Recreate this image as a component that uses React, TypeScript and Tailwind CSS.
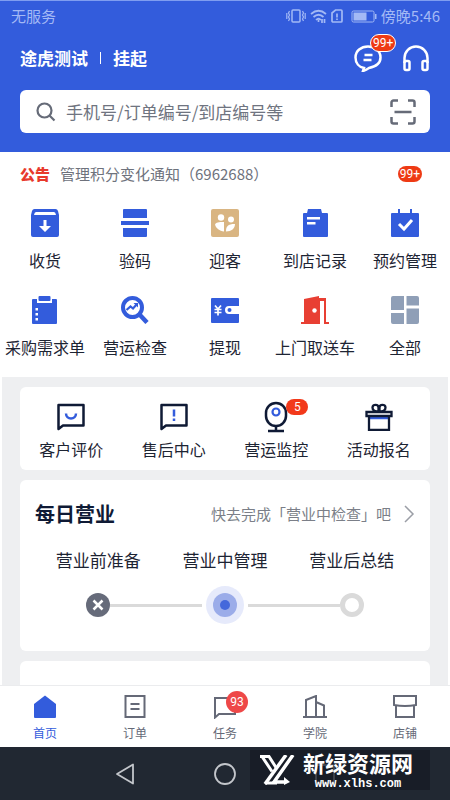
import React from 'react';
import clsx from 'clsx';

const BLUE = '#335cdc';

const ReceiveIcon = () => (
  <svg className="h-7 w-7" viewBox="0 0 28 28" fill={BLUE}>
    <path d="M4 0h20a3 3 0 0 1 3 2l1 4v20a2 2 0 0 1-2 2H2a2 2 0 0 1-2-2V6l1-4a3 3 0 0 1 3-2z" />
    <path d="M5 3h18q1.500 0 2 3H3q.5-3 2-3zM12.500 11h3v6H20l-6 6-6-6h4.500z" fill="#fff" />
  </svg>
);

const CodeIcon = () => (
  <svg className="h-7 w-7" viewBox="0 0 28 28" fill={BLUE}>
    <path d="M3 0h22a1 1 0 0 1 1 1v8H2V1a1 1 0 0 1 1-1zM0 12h28v4H0zM2 19h24v8a1 1 0 0 1-1 1H3a1 1 0 0 1-1-1z" />
  </svg>
);

const GuestIcon = () => (
  <svg className="h-7 w-7" viewBox="0 0 28 28">
    <rect width="28" height="28" rx="2" fill="#d9b582" />
    <g fill="#fff">
      <circle cx="10" cy="8.500" r="3.200" />
      <circle cx="20" cy="10.500" r="3" />
      <path d="M4 15.500c1-2 3.500-2.500 9-2.500v9.500C8.500 22 5 19.500 4 15.500z" />
      <path d="M15 22.500c0-5 1.500-7.500 9-7.500 0 4.500-3.500 7.500-9 7.500z" />
    </g>
  </svg>
);

const RecordIcon = () => (
  <svg className="h-7 w-7" viewBox="0 0 28 28" fill={BLUE}>
    <path d="M7 0h13l1 4h5a1 1 0 0 1 1 1v22a1 1 0 0 1-1 1H3a1 1 0 0 1-1-1V5a1 1 0 0 1 1-1h3z" />
    <path d="M6 8h13v2.500H6zM6 13h8.500v2.500H6z" fill="#fff" />
  </svg>
);

const BookingIcon = () => (
  <svg className="h-7 w-7" viewBox="0 0 28 28" fill={BLUE}>
    <path d="M7 0h2v4h10V0h2v4h6a1 1 0 0 1 1 1v22a1 1 0 0 1-1 1H1a1 1 0 0 1-1-1V5a1 1 0 0 1 1-1h6z" />
    <path d="M8 15l5 5 8-9" fill="none" stroke="#fff" strokeWidth="3" />
  </svg>
);

const PurchaseIcon = () => (
  <svg className="h-7 w-7" viewBox="0 0 28 28" fill={BLUE}>
    <path d="M2 3h4v4h15V3h4a1 1 0 0 1 1 1v23a1 1 0 0 1-1 1H2a1 1 0 0 1-1-1V4a1 1 0 0 1 1-1z" />
    <rect x="7.500" width="12" height="5" rx="1" />
    <path d="M4.500 12H7v2.500H4.500zM4.500 17H7v2.500H4.500zM4.500 22H7v2.500H4.500z" fill="#fff" />
  </svg>
);

const InspectIcon = () => (
  <svg className="h-7 w-7" viewBox="0 0 28 28" fill="none" stroke={BLUE}>
    <circle cx="11.500" cy="11.500" r="9.500" strokeWidth="4" />
    <path d="M18.500 18.500l7.500 8" strokeWidth="4.500" />
    <path d="M5.500 14l4-3.500 2.500 2 4-4.500" strokeWidth="2.200" />
    <path d="M12.500 7h4.500v4.500z" fill={BLUE} stroke="none" />
  </svg>
);

const WithdrawIcon = () => (
  <svg className="h-7 w-7" viewBox="0 0 28 28" fill={BLUE}>
    <path d="M1 2h26a1 1 0 0 1 1 1v7H18a4 4 0 0 0 0 8h10v8a1 1 0 0 1-1 1H1a1 1 0 0 1-1-1V3a1 1 0 0 1 1-1z" />
    <circle cx="18.500" cy="14" r="2" />
    <path d="M4 9.500l3 3.500 3-3.500M3.500 13.500h7M3.500 16.500h7M7 13v6.500" fill="none" stroke="#fff" strokeWidth="1.700" />
  </svg>
);

const DoorIcon = () => (
  <svg className="h-7 w-7" viewBox="0 0 28 28" fill="#e83f33">
    <path d="M3 3l15-3v2h7v24h3v2h-5V5h-4v23H0v-2h3z" />
    <circle cx="13.500" cy="14.500" r="2.200" fill="#fff" />
  </svg>
);

const AllIcon = () => (
  <svg className="h-7 w-7" viewBox="0 0 28 28" fill="#8f9fb7">
    <path d="M2 0h11v14H0V2a2 2 0 0 1 2-2zM15.500 0H26a2 2 0 0 1 2 2v7.500H15.500zM0 17h13v11H2a2 2 0 0 1-2-2zM15.500 12.500H28V26a2 2 0 0 1-2 2H15.500z" />
  </svg>
);

const ReviewIcon = () => (
  <svg className="h-7 w-7" viewBox="0 0 28 28" fill="none" strokeWidth="2.500">
    <path d="M1.500 2h25v20.500H6L1.500 26z" stroke="#0f1a35" strokeLinejoin="round" />
    <path d="M9 10.500a5 5 0 0 0 10 0" stroke={BLUE} />
  </svg>
);

const AfterSaleIcon = () => (
  <svg className="h-7 w-7" viewBox="0 0 28 28" fill="none" strokeWidth="2.500">
    <path d="M1.500 2h25v20.500H6L1.500 26z" stroke="#0f1a35" strokeLinejoin="round" />
    <path d="M14 6.500v7M14 15.500v2.500" stroke={BLUE} />
  </svg>
);

const MonitorIcon = () => (
  <svg className="h-8 w-7" viewBox="0 0 28 32" fill="none" strokeWidth="2.500">
    <rect x="4" y="2" width="20" height="23" rx="10" stroke="#0f1a35" />
    <path d="M14 25v5M6 30h16" stroke="#0f1a35" />
    <circle cx="14" cy="11" r="3.500" stroke={BLUE} strokeWidth="2.200" />
  </svg>
);

const GiftIcon = () => (
  <svg className="h-7 w-7" viewBox="0 0 28 28" fill="none" stroke="#0f1a35" strokeWidth="2.300">
    <path d="M4 15h20" stroke={BLUE} strokeWidth="2.500" />
    <path d="M1.500 9h25v4h-25zM4 13v14h20V13" />
    <path d="M13.500 8.500c-3.500 0-6-1.500-6-4 0-3.500 6-3.500 6 0zM14.500 8.500c3.500 0 6-1.500 6-4 0-3.500-6-3.500-6 0z" />
  </svg>
);

const HomeIcon = () => (
  <svg className="h-6 w-6" viewBox="0 0 24 24" fill={BLUE}>
    <path d="M12 0.500L23 9v13a1 1 0 0 1-1 1H2a1 1 0 0 1-1-1V9z" />
  </svg>
);

const OrderIcon = () => (
  <svg className="h-6 w-6" viewBox="0 0 24 24" fill="none" stroke="currentColor" strokeWidth="2">
    <path d="M2.500 1h19v21h-19zM7.500 9h9M7.500 14h9" />
  </svg>
);

const TaskIcon = () => (
  <svg className="h-6 w-6" viewBox="0 0 24 24" fill="none" stroke="currentColor" strokeWidth="2">
    <path d="M2 3h20v16H6l-4 3.500z" />
  </svg>
);

const SchoolIcon = () => (
  <svg className="h-6 w-6" viewBox="0 0 24 24" fill="none" stroke="currentColor" strokeWidth="2">
    <path d="M0 22h24M3 22V5l10-4v21M13 7l8 3.500V22" />
  </svg>
);

const ShopIcon = () => (
  <svg className="h-6 w-6" viewBox="0 0 24 24" fill="none" stroke="currentColor" strokeWidth="2">
    <path d="M1 1h22v9q-11 2-22 0zM3 10v12h18V10" />
  </svg>
);

const shortcuts = [
  { label: '收货', icon: <ReceiveIcon /> },
  { label: '验码', icon: <CodeIcon /> },
  { label: '迎客', icon: <GuestIcon /> },
  { label: '到店记录', icon: <RecordIcon /> },
  { label: '预约管理', icon: <BookingIcon /> },
  { label: '采购需求单', icon: <PurchaseIcon /> },
  { label: '营运检查', icon: <InspectIcon /> },
  { label: '提现', icon: <WithdrawIcon /> },
  { label: '上门取送车', icon: <DoorIcon /> },
  { label: '全部', icon: <AllIcon /> },
];

const services = [
  { label: '客户评价', icon: <ReviewIcon /> },
  { label: '售后中心', icon: <AfterSaleIcon /> },
  { label: '营运监控', icon: <MonitorIcon />, badge: 5 },
  { label: '活动报名', icon: <GiftIcon /> },
];

const tabs = [
  { label: '首页', icon: <HomeIcon />, active: true },
  { label: '订单', icon: <OrderIcon /> },
  { label: '任务', icon: <TaskIcon />, badge: 93 },
  { label: '学院', icon: <SchoolIcon /> },
  { label: '店铺', icon: <ShopIcon /> },
];

function StatusBar() {
  return (
    <div className="flex h-[30px] items-center justify-between pr-2.5 pl-[11px] text-[#a3b9f5]">
      <span className="text-[15px]">无服务</span>
      <div className="flex items-center gap-1">
        <svg className="h-4 w-5" viewBox="0 0 20 16" fill="none" stroke="currentColor" strokeWidth="1.500">
          <rect x="6" y="2" width="8" height="12" rx="1" />
          <path d="M3.500 3l-1 2 1 2-1 2 1 2-1 2M.8 5v6M16.500 3l1 2-1 2 1 2-1 2 1 2M19.200 5v6" strokeWidth="1.200" />
        </svg>
        <svg className="h-4 w-[17px]" viewBox="0 0 17 16" fill="none" stroke="currentColor" strokeWidth="1.700">
          <path d="M1 6q7.500-6.500 15 0M3.500 9q5-4.500 10 0M6 12q2.500-2.500 5 0" />
          <path d="M8.500 12v2M12 11v4M14.500 11v4" />
        </svg>
        <svg className="h-4 w-3" viewBox="0 0 12 16" fill="none" stroke="currentColor" strokeWidth="1.700">
          <path d="M4.500 2H10a1 1 0 0 1 1 1v10a1 1 0 0 1-1 1H2a1 1 0 0 1-1-1V5zM6 5.500v4M6 10.500V12" />
        </svg>
        <svg className="ml-1 h-4 w-[26px]" viewBox="0 0 26 16">
          <rect x="1" y="3" width="22" height="11" rx="1.500" fill="none" stroke="currentColor" />
          <path d="M2.500 4.500h13v8h-13zM24 6h1.500v5H24z" fill="currentColor" />
        </svg>
        <span className="text-[15px]">傍晚5:46</span>
      </div>
    </div>
  );
}

function Header() {
  return (
    <header className="border-t border-[#7f9df0] bg-[#335cdc] pb-[19px]">
      <StatusBar />
      <div className="flex h-[54px] items-center justify-between px-5 text-white">
        <div className="flex items-center text-[17px] font-bold">
          <h1>途虎测试</h1>
          <span className="mx-3 h-3 w-px bg-white" />
          <button type="button">挂起</button>
        </div>
        <div className="flex items-center gap-5">
          <button type="button" aria-label="消息" className="relative">
            <svg className="h-7 w-7" viewBox="0 0 28 28" fill="none" stroke="currentColor" strokeWidth="2.500">
              <path d="M9 27l1-3C5 23 1.500 19 1.500 13.500 1.500 7 7 2.500 14 2.500S26.500 7 26.500 13.500C26.500 20 20 23 15 24q-3 2-6 3z" />
              <path d="M10.500 11h8M9.500 16h8" />
            </svg>
            <span className="absolute -top-2.5 left-4 rounded-full border border-white bg-[#ee3a14] px-0.5 font-[Roboto,sans-serif] text-xs leading-4">99+</span>
          </button>
          <button type="button" aria-label="客服">
            <svg className="h-7 w-7" viewBox="0 0 28 28" fill="none" stroke="currentColor" strokeWidth="2.500">
              <path d="M2.500 19v-5a11.500 11.500 0 0 1 23 0v5" />
              <rect x="2.500" y="17" width="5" height="9" rx="1.500" />
              <rect x="20.500" y="17" width="5" height="9" rx="1.500" />
            </svg>
          </button>
        </div>
      </div>
      <div className="mx-5 mt-[5px] flex h-[43px] items-center rounded-md bg-white pr-3.5 pl-4 text-[#666b78]">
        <svg className="h-5 w-5 shrink-0" viewBox="0 0 20 20" fill="none" stroke="currentColor" strokeWidth="2.200">
          <circle cx="8.500" cy="8.500" r="7" />
          <path d="M13.500 13.500l5 5" />
        </svg>
        <input
          type="text"
          aria-label="搜索"
          placeholder="手机号/订单编号/到店编号等"
          className="ml-2.5 min-w-0 flex-1 text-[17px] outline-none placeholder:text-[#6f7480]"
        />
        <button type="button" aria-label="扫码">
          <svg className="h-[26px] w-[26px]" viewBox="0 0 26 26" fill="none" stroke="currentColor" strokeWidth="2.500">
            <path d="M1.500 8V3.500a2 2 0 0 1 2-2H8M18 1.500h4.500a2 2 0 0 1 2 2V8M24.500 18v4.500a2 2 0 0 1-2 2H18M8 24.500H3.500a2 2 0 0 1-2-2V18M4.500 13h17" />
          </svg>
        </button>
      </div>
    </header>
  );
}

function Shortcuts() {
  return (
    <section className="bg-white pb-[18px]">
      <div className="flex h-11 items-center pr-7 pl-5">
        <span className="text-[15px] font-black text-[#e8392c]">公告</span>
        <a href="#notice" className="ml-2.5 flex-1 text-[15px] text-[#6e727c]">管理积分变化通知（6962688）</a>
        <span className="rounded-full bg-[#ee3a14] px-0.5 font-[Roboto,sans-serif] text-xs leading-4 text-white">99+</span>
      </div>
      <div className="grid grid-cols-5 gap-y-6 pt-[13px]">
        {shortcuts.map((item) => (
          <button key={item.label} type="button" className="flex flex-col items-center gap-[11px]">
            {item.icon}
            <span className="text-base leading-6 whitespace-nowrap">{item.label}</span>
          </button>
        ))}
      </div>
    </section>
  );
}

function Services() {
  return (
    <section className="grid grid-cols-4 rounded-md bg-white pt-4 pb-[9px]">
      {services.map((item) => (
        <button key={item.label} type="button" className="flex flex-col items-center gap-1.5">
          <span className="relative flex h-7 items-center">
            {item.icon}
            {item.badge && (
              <span className="absolute -top-1 left-6 w-[22px] rounded-full bg-[#f2391a] font-[Roboto,sans-serif] text-xs leading-4 text-white">
                {item.badge}
              </span>
            )}
          </span>
          <span className="text-base leading-6">{item.label}</span>
        </button>
      ))}
    </section>
  );
}

function DailyBusiness() {
  return (
    <section className="rounded-md bg-white px-[15px] pt-5 pb-[27px]">
      <div className="flex h-7 items-center justify-between">
        <h2 className="text-xl font-bold text-[#0f1a35]">每日营业</h2>
        <a href="#check" className="flex items-center gap-3 text-[15px] text-[#7b7f88]">
          快去完成「营业中检查」吧
          <svg className="h-[18px] w-3" viewBox="0 0 12 18" fill="none" stroke="#9b9ea6" strokeWidth="1.500">
            <path d="M2 1l8 8-8 8" />
          </svg>
        </a>
      </div>
      <ol className="mt-5 grid grid-cols-3 text-center text-[17px] leading-6">
        <li>营业前准备</li>
        <li>营业中管理</li>
        <li>营业后总结</li>
      </ol>
      <div className="mt-3.5 flex h-[38px] items-center px-[51px]">
        <svg className="h-6 w-6" viewBox="0 0 24 24">
          <circle cx="12" cy="12" r="12" fill="#666b7a" />
          <path d="M7.500 7.500l9 9M16.500 7.500l-9 9" stroke="#fff" strokeWidth="2.500" />
        </svg>
        <span className="mr-1 h-[3px] flex-1 bg-[#dadada]" />
        <svg className="h-[38px] w-[38px]" viewBox="0 0 38 38">
          <circle cx="19" cy="19" r="19" fill="#e6eafb" />
          <circle cx="19" cy="19" r="12" fill="#9bace9" />
          <circle cx="19" cy="19" r="5" fill="#4468db" />
        </svg>
        <span className="ml-1 h-[3px] flex-1 bg-[#dadada]" />
        <span className="h-6 w-6 rounded-full border-5 border-[#dadada]" />
      </div>
    </section>
  );
}

function TabBar() {
  return (
    <nav className="grid grid-cols-5 border-t border-[#ebecee] bg-white pt-[9px] pb-1.5">
      {tabs.map((tab) => (
        <button
          key={tab.label}
          type="button"
          className={clsx('flex flex-col items-center gap-1.5', tab.active ? 'text-[#335cdc]' : 'text-[#656977]')}
        >
          <span className="relative">
            {tab.icon}
            {tab.badge && (
              <span className="absolute -top-1 left-[13px] h-[22px] w-[22px] rounded-full bg-[#ee4848] font-[Roboto,sans-serif] text-xs leading-[22px] text-white">
                {tab.badge}
              </span>
            )}
          </span>
          <span className="text-xs leading-4">{tab.label}</span>
        </button>
      ))}
    </nav>
  );
}

function SystemBar() {
  return (
    <div className="relative h-[53px] bg-[#212832] text-[#c3c6cb]">
      <div className="mx-auto grid h-full w-2/3 grid-cols-3 place-items-center">
        <button type="button" aria-label="返回">
          <svg className="h-[22px] w-5" viewBox="0 0 20 22" fill="none" stroke="currentColor" strokeWidth="1.800" strokeLinejoin="round">
            <path d="M18 1.500v19L2 11z" />
          </svg>
        </button>
        <button type="button" aria-label="主屏幕">
          <svg className="h-[22px] w-[22px]" viewBox="0 0 22 22" fill="none" stroke="currentColor" strokeWidth="1.800">
            <circle cx="11" cy="11" r="10" />
          </svg>
        </button>
        <button type="button" aria-label="最近任务">
          <svg className="h-5 w-5" viewBox="0 0 20 20" fill="none" stroke="currentColor" strokeWidth="1.800">
            <rect x="1" y="1" width="18" height="18" rx="1" />
          </svg>
        </button>
      </div>
      <div className="absolute top-[3px] right-5 flex h-10 w-[180px] items-center gap-2 bg-[#151924]/75 pl-2.5 text-white">
        <svg className="h-[30px] w-[35px]" viewBox="0 0 35 30" fill="none" stroke="currentColor" strokeWidth="3">
          <path d="M0 1.500h9l7 11M2 1.500l10 15" />
          <path d="M26 0L5 29" strokeWidth="3.500" />
          <path d="M33 0L14 27h12" strokeWidth="3.500" />
          <path d="M5 28h12" />
          <path d="M24 22l6 5-6 3z" fill="currentColor" stroke="none" />
        </svg>
        <div className="text-center">
          <p className="text-[22px] leading-6 font-bold">新绿资源网</p>
          <p className="mt-1 font-['Liberation_Mono',monospace] text-xs leading-3 font-bold">www.xlhs.com</p>
        </div>
      </div>
    </div>
  );
}

export default function App() {
  return (
    <div className="flex min-h-screen flex-col bg-[#eeeff1] font-['Noto_Sans_CJK_SC',sans-serif] text-[#1d2433]">
      <Header />
      <Shortcuts />
      <main className="flex flex-1 flex-col gap-2.5 border-x-2 border-white px-[18px] pt-2.5">
        <Services />
        <DailyBusiness />
        <section className="min-h-6 flex-1 rounded-t-md bg-white" />
      </main>
      <TabBar />
      <SystemBar />
    </div>
  );
}
